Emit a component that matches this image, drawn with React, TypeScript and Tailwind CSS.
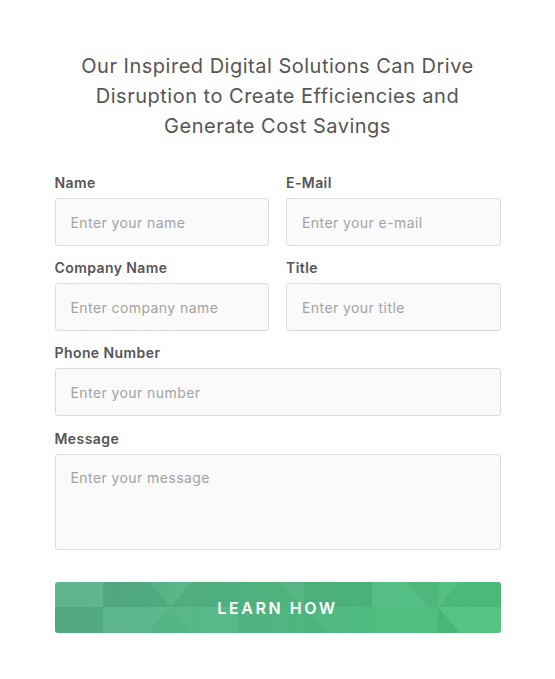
import React from "react";

const font = { fontFamily: "Inter, 'Open Sans', sans-serif" };

function Field({ label, placeholder }: { label: string; placeholder: string }) {
  return (
    <div className="flex flex-col">
      <label className="mb-[5px] text-[14px] leading-5 font-semibold tracking-[0.03em] text-[#555]">{label}</label>
      <input
        placeholder={placeholder}
        className="h-[48px] w-full rounded-[3px] border border-[#dcdcdc] bg-[#fafafa] px-[15px] text-[14px] tracking-[0.03em] text-[#555] placeholder:text-[#a3a3a3] outline-none"
      />
    </div>
  );
}

function ButtonPattern() {
  // faint triangle mosaic over the green gradient
  return (
    <svg className="absolute inset-0 h-full w-full" viewBox="0 0 446 51" preserveAspectRatio="none">
      <defs>
        <linearGradient id="g" x1="0" x2="1" y1="0" y2="0">
          <stop offset="0" stopColor="#57b089" />
          <stop offset="1" stopColor="#4cc17c" />
        </linearGradient>
      </defs>
      <rect width="446" height="51" fill="url(#g)" />
      {/* col 0 */}
      <rect x="0" y="0" width="48" height="25" fill="#fff" opacity="0.06" />
      <rect x="0" y="25" width="48" height="26" fill="#000" opacity="0.05" />
      {/* col 1 */}
      <polygon points="48,0 95,0 115,25 48,25" fill="#000" opacity="0.06" />
      <polygon points="48,25 115,25 92,51 48,51" fill="#fff" opacity="0.05" />
      {/* col 2 */}
      <polygon points="115,25 138,0 182,0 182,25" fill="#000" opacity="0.04" />
      <polygon points="115,25 135,0 115,0" fill="#fff" opacity="0.04" />
      <polygon points="115,25 182,25 182,51 138,51" fill="#fff" opacity="0.03" />
      {/* col 3 */}
      <rect x="182" y="0" width="67" height="25" fill="#000" opacity="0.03" />
      <polygon points="182,25 249,25 249,51 182,51" fill="#000" opacity="0.02" />
      {/* col 4 */}
      <polygon points="249,0 317,0 317,25 249,25" fill="#000" opacity="0.05" />
      <polygon points="225,0 249,0 249,25" fill="#fff" opacity="0.05" />
      <polygon points="249,25 272,51 249,51" fill="#000" opacity="0.03" />
      {/* col 5 */}
      <rect x="317" y="0" width="66" height="25" fill="#fff" opacity="0.04" />
      <polygon points="352,0 383,0 383,25 372,25" fill="#000" opacity="0.05" />
      <rect x="317" y="25" width="66" height="26" fill="#fff" opacity="0.02" />
      {/* col 6 */}
      <polygon points="383,25 405,0 446,0 446,25" fill="#000" opacity="0.03" />
      <polygon points="383,0 405,0 383,25" fill="#fff" opacity="0.04" />
      <polygon points="383,25 446,25 446,51 405,51" fill="#fff" opacity="0.05" />
      <polygon points="383,25 405,51 383,51" fill="#000" opacity="0.05" />
    </svg>
  );
}

export default function App() {
  return (
    <div className="min-h-[679px] w-full bg-white" style={font}>
      <div className="mx-auto w-[446px] pt-[51px]">
        <h2 className="text-center text-[20px] leading-[30px] font-normal tracking-[0.025em] text-[#555]">
          Our Inspired Digital Solutions Can Drive
          <br />
          Disruption to Create Efficiencies and
          <br />
          Generate Cost Savings
        </h2>

        <form className="mt-[32px] flex flex-col gap-[12px]" onSubmit={(e) => e.preventDefault()}>
          <div className="grid grid-cols-2 gap-x-[17px]">
            <Field label="Name" placeholder="Enter your name" />
            <Field label="E-Mail" placeholder="Enter your e-mail" />
          </div>
          <div className="grid grid-cols-2 gap-x-[17px]">
            <Field label="Company Name" placeholder="Enter company name" />
            <Field label="Title" placeholder="Enter your title" />
          </div>
          <Field label="Phone Number" placeholder="Enter your number" />
          <div className="mt-px flex flex-col">
            <label className="mb-[5px] text-[14px] leading-5 font-semibold tracking-[0.03em] text-[#555]">Message</label>
            <textarea
              placeholder="Enter your message"
              className="h-[96px] w-full resize-none rounded-[3px] border border-[#dcdcdc] bg-[#fafafa] px-[15px] py-[12px] text-[14px] tracking-[0.03em] text-[#555] placeholder:text-[#a3a3a3] outline-none"
            />
          </div>
          <button
            type="submit"
            className="relative mt-[20px] h-[51px] w-full overflow-hidden rounded-[3px] text-[16px] font-semibold tracking-[0.16em] text-white"
          >
            <ButtonPattern />
            <span className="relative">LEARN HOW</span>
          </button>
        </form>
      </div>
    </div>
  );
}
